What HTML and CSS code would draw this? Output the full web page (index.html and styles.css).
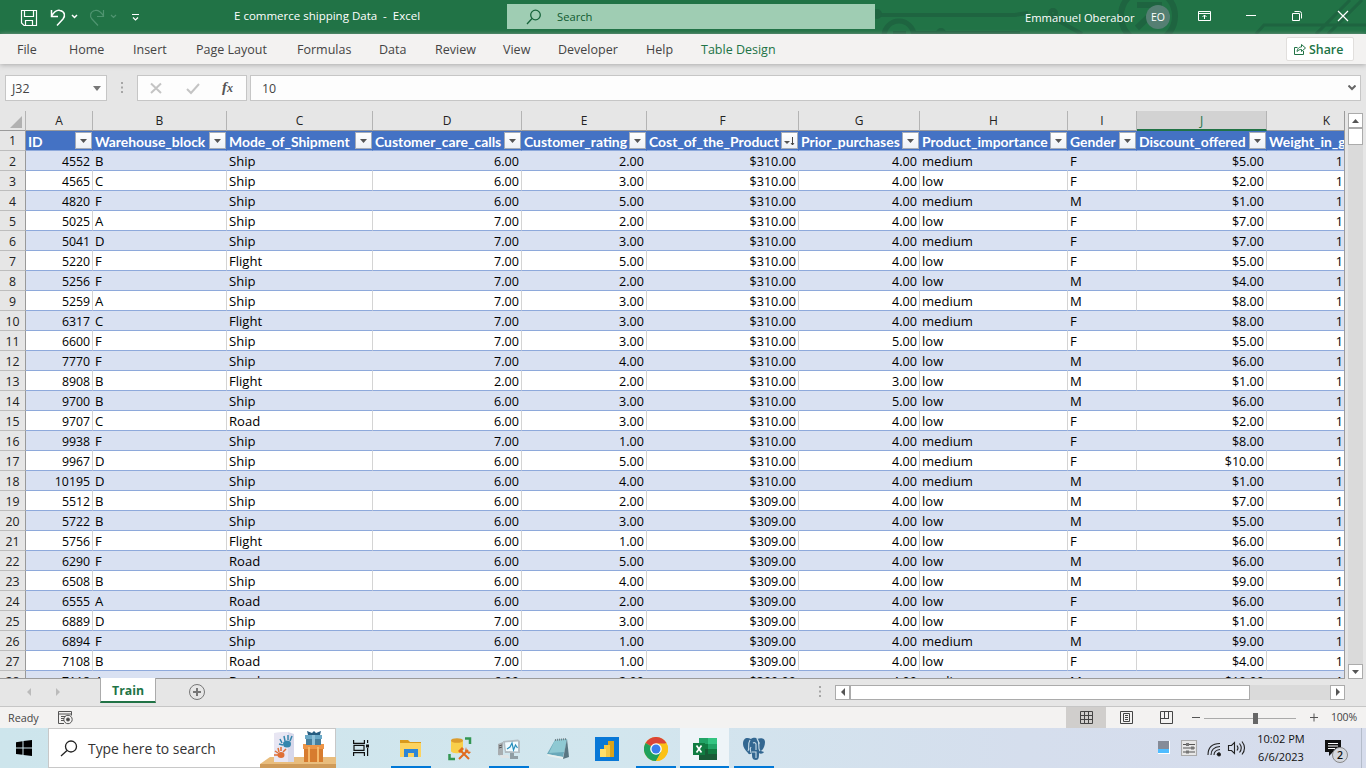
FILE: index.html
```html
<!DOCTYPE html>
<html lang="en">
<head>
<meta charset="utf-8">
<title>E commerce shipping Data - Excel</title>
<link rel="stylesheet" href="styles.css">
</head>
<body>
<div class="app">
  <header class="titlebar">
    <svg class="circuit" width="496" height="34" fill="none" stroke="#1e6440" stroke-width="4">
      <path d="M5 15H145L158 13M42 33L58 33H150M180 16L212 34M226 34"/>
      <circle cx="7" cy="14" r="3"/><circle cx="29" cy="36" r="15" stroke-width="5"/><path d="M23 33h13"/><circle cx="71" cy="33" r="3"/><circle cx="183" cy="13" r="3"/>
      <circle cx="278" cy="16" r="27" stroke-width="6"/><path d="M267 5H292M289 7L267 28" stroke-width="6"/>
      <path d="M386 34L394 25H496M446 34L480 0M458 34L492 0" stroke-width="3"/>
    </svg>
    <svg class="quick" width="150" height="34" fill="none" stroke="#fff" stroke-width="1.2">
      <path d="M21.5 10.5h15v15H24l-2.500-2.500zM24.500 10.500v6h9v-6M25.500 25.500v-5h7v5"/>
      <path d="M51.500 10v6.500H58M51.500 16C55 10.500 58 10 60 10.500C65 11.500 65.500 16 63 19L57 25.500M72 15l2.500 2.500L77 15" stroke-width="1.500"/>
      <path d="M103.500 10v6.500H97M103.500 16C100 10.500 97 10 95 10.500C90 11.500 89.500 16 92 19L98 25.500M111 15l2.500 2.500L116 15" stroke="#4f9470"/>
      <path d="M132 14.500h7M133 17.500l2.500 2.500L138 17.500"/>
    </svg>
    <div class="doc-title">E commerce shipping Data&nbsp; -&nbsp; Excel</div>
    <div class="search"><svg width="16" height="16" fill="none" stroke="#16633a" stroke-width="1.300"><circle cx="9.500" cy="6" r="4.800"/><path d="M6 9.500L1 15"/></svg><span>Search</span></div>
    <div class="user">Emmanuel Oberabor</div>
    <div class="avatar">EO</div>
    <svg class="winctl" width="170" height="34" fill="none" stroke="#fff" stroke-width="1">
      <path d="M2.500 11.500h12v9h-12zM2.500 13.500h12M8.500 19v-4M6.500 17l2-2 2 2M50 15.500h10M96.500 13.500h7v7h-7zM98.500 11.500h5q2 0 2 2v5"/><path d="M142 11l10 10M152 11l-10 10" stroke-width="1.200"/>
    </svg>
  </header>

  <nav class="ribbon">
    <span>File</span><span>Home</span><span>Insert</span><span>Page Layout</span><span>Formulas</span><span>Data</span><span>Review</span><span>View</span><span>Developer</span><span>Help</span><span class="context">Table Design</span>
    <button class="share"><svg width="12" height="12" fill="none" stroke="#217346"><path d="M3.500 4.500h-3v7h9V8M3 8.500C3.500 5 5.500 4 7.500 4V1.500L11.500 5 7.500 8.500V6.500C5.500 6.500 4.500 7 3 8.500z"/></svg>Share</button>
  </nav>

  <div class="formula-row">
    <div class="namebox">J32<svg width="8" height="5"><path d="M0 0h8L4 5z" fill="#777"/></svg></div>
    <svg class="grip" width="3" height="12" fill="#a6a6a6"><path d="M0 0h2v2H0zM0 4.500h2v2H0zM0 9h2v2H0z"/></svg>
    <div class="fx"><svg width="108" height="24" fill="none" stroke="#c4c4c4" stroke-width="2"><path d="M13 7.500l10 9.500M23 7.500L13 17M49 13l4 4 8-9"/></svg><i>f<small>x</small></i></div>
    <div class="formula">10<svg width="8" height="6" fill="none" stroke="#666" stroke-width="2"><path d="M.5.5L4 4 7.500.5"/></svg></div>
  </div>

  <div class="sheet-wrap">
    <main class="sheet" id="sheet"></main>
    <div class="vscroll">
      <span class="sb"><svg width="7" height="4"><path d="M0 4h7L3.500 0z" fill="#555"/></svg></span>
      <span class="vthumb"></span>
      <span class="sb"><svg width="7" height="4"><path d="M0 0h7L3.500 4z" fill="#555"/></svg></span>
    </div>
  </div>

  <div class="tabs">
    <svg class="tabnav" width="100" height="27" fill="#bbb"><path d="M31 9v8l-4-4zM56 9v8l4-4z"/></svg>
    <div class="tab">Train</div>
    <svg class="add" width="18" height="18" fill="none" stroke="#777"><circle cx="9" cy="9" r="7.500"/><path d="M9 5v8M5 9h8" stroke-width="2"/></svg>
    <svg class="grip" width="3" height="12" fill="#a6a6a6"><path d="M0 0h2v2H0zM0 4.500h2v2H0zM0 9h2v2H0z"/></svg>
    <div class="hscroll">
      <span class="sb"><svg width="4" height="8"><path d="M4 0v8L0 4z" fill="#555"/></svg></span>
      <span class="hthumb"></span>
      <span class="sb"><svg width="4" height="8"><path d="M0 0v8l4-4z" fill="#555"/></svg></span>
    </div>
  </div>

  <footer class="status">
    <span class="ready">Ready</span>
    <svg width="16" height="14" fill="none" stroke="#555"><path d="M6 12.500H.5V.5h13v4M.5 3h13M3 5.500h4M3 7.500h3M3 9.500h3"/><circle cx="10" cy="8.500" r="4.200"/><circle cx="10" cy="8.500" r="1.500" fill="#444"/></svg>
    <div class="views">
      <span class="on"><svg width="13" height="13" fill="none" stroke="#444"><path d="M.5.5h12v12H.5zM4.500 0v13M8.500 0v13M0 4.500h13M0 8.500h13"/></svg></span>
      <span><svg width="13" height="13" fill="none" stroke="#444"><path d="M.5.5h12v12H.5zM3.500 2.500h6v8h-6zM5 4.500h3M5 6.500h3M5 8.500h3"/></svg></span>
      <span><svg width="13" height="13" fill="none" stroke="#444"><path d="M.5.5h12v12H.5zM4.500 0v7.500M8.500 0v7.500M0 7.500h9"/></svg></span>
    </div>
    <svg class="zoom" width="128" height="20"><path d="M2 9.500h8M120 9.500h8M124 5.500v8" stroke="#555" fill="none"/><path d="M14 10.500h92" stroke="#aaa"/><path d="M63 5h5v11h-5z" fill="#666"/></svg>
    <span class="pct">100%</span>
  </footer>

  <div class="taskbar">
    <div class="start"><svg width="16" height="16"><path d="M0 2.200L6.500 1.300V7.500H0zM7.500 1.100L16 0V7.500H7.500zM0 8.500h6.500v6.300L0 13.900zM7.500 8.500H16V16L7.500 14.900z"/></svg></div>
    <div class="tsearch">
      <svg class="mag" width="18" height="17" fill="none" stroke="#222" stroke-width="1.300"><circle cx="11" cy="6.500" r="5.500"/><path d="M7 10.500L1 16"/></svg>
      <span>Type here to search</span>
      <svg class="gift" width="76" height="39">
        <path d="M0 35L10 28H76V35z" fill="#e9bd7d"/><path d="M0 35H76v4H0z" fill="#cf9b59"/>
        <path d="M14 4l14-1 6 2v28H14z" fill="#d7d8ea"/><path d="M14 4l14-1v30H14z" fill="#e8e6f3"/>
        <path d="M22 14l-2-4M25 12l-1-5M28 11V6M30 12l2-5M23 16l-4-1" stroke="#3486ad" stroke-width="1.500" fill="none"/><ellipse cx="27" cy="15" rx="4" ry="3.500" fill="#3486ad"/>
        <path d="M18 24l-3-2M19 23l-1-4M21 22V18M23 23l3-3M18 26h-4" stroke="#df6f36" stroke-width="1.500" fill="none"/><ellipse cx="21" cy="26" rx="3.500" ry="3" fill="#df6f36"/>
        <path d="M44 18h19v15H44z" fill="#d77c2f"/><path d="M43 15h21v5H43z" fill="#ed9548"/><path d="M46 8h15v8H46z" fill="#477f9e"/><path d="M45 6h17v4H45z" fill="#6aa8c6"/><path d="M48 6l-1-4 5 2 2-2 2 2 5-2-1 4z" fill="#275d80"/><path d="M52 6h3v10h-3z" fill="#8fc0d8"/><path d="M48 18h2v15h-2zM57 18h2v15h-2z" fill="#f5b869"/>
      </svg>
    </div>
    <div class="task plain"><svg width="17" height="16" fill="none" stroke="#111" stroke-width="1.200"><path d="M.6 0v3.400h10.800V0M.6 16v-3.400h10.800V16M1 5.400h10v5H1zM14.600 0v3M14.600 8v8"/><path d="M13 4.500h3v3h-3z" fill="#111" stroke="none"/></svg></div>
    <div class="task run"><svg width="22" height="20"><path d="M0 1h8l2 2h11v5H0z" fill="#d99a1c"/><path d="M0 4h21v14H0z" fill="#fcd35f"/><path d="M4 18v-8h14v8h-4v-4H8v4z" fill="#2e86d6"/></svg></div>
    <div class="task"><svg width="24" height="24"><path d="M3 3v11c0 3 12 3 12 0V3z" fill="#f9cf4a"/><ellipse cx="9" cy="3.500" rx="6" ry="2.300" fill="#dc9c2d"/><path d="M17 1.500h5V7M1.500 17v5H7" fill="none" stroke="#339653" stroke-width="2.500"/><path d="M13 14l8 8M20 13l-9 9" stroke="#e06b1f" stroke-width="2"/><path d="M10 14l4-4 2 2-4 4zM18 10l1 4 4 1-2 2-4-3z" fill="#e06b1f"/></svg></div>
    <div class="task run"><svg width="24" height="22"><path d="M1 6l5-2v14l-5-1z" fill="#a8adb0"/><path d="M2 8l3-1M2 10l3-1" stroke="#555"/><path d="M6 3l15-1.500 2 1.500v12L8 15z" fill="#b3bcc2"/><path d="M8 4.500l13-1v10L9 13z" fill="#f1fbff"/><path d="M10 11l3-2 2-4 1.500 7 2-5 2 3" fill="none" stroke="#268dbb" stroke-width="1.200"/><path d="M13 15h4v3h4v3h-8z" fill="#909da4"/><path d="M3 17h8l2 3H4z" fill="#dfe3e5"/></svg></div>
    <div class="task"><svg width="24" height="22"><path d="M9 2l12-1-4 18-16-3z" fill="#6aa9ba"/><path d="M9 2l12-1-3 13-15 1z" fill="#8fc9d3"/><path d="M21 1l2 18-6 2z" fill="#597682"/><path d="M1 16l16 3v2L2 18z" fill="#e9f0ef"/><path d="M9 2l12-1" stroke="#718087" stroke-width="2" stroke-dasharray="1 1"/></svg></div>
    <div class="task"><svg width="24" height="24"><path d="M0 0h24v24H0z" fill="#0878d7"/><path d="M13 4h6v16h-6z" fill="#d9a319"/><path d="M9 8h6v12H9z" fill="#f2c745"/><path d="M5 12h6v8H5z" fill="#ffe06a"/></svg></div>
    <div class="task run"><svg width="24" height="24"><circle cx="12" cy="12" r="12" fill="#fbc116"/><path d="M12 12L1.600 6A12 12 0 0 1 22.400 6z" fill="#db4437"/><path d="M12 12L1.600 6A12 12 0 0 0 12 24L17.200 15z" fill="#1fa15d"/><path d="M12 6.500H22.600L22.400 6A12 12 0 0 1 12 24L17 15z" fill="#fbc116"/><circle cx="12" cy="12" r="5.800" fill="#fff"/><circle cx="12" cy="12" r="4.500" fill="#3b7ded"/></svg></div>
    <div class="task run active"><svg width="24" height="22"><path d="M6 0h18v22H6z" fill="#21a366"/><path d="M15 0h9v6h-9z" fill="#33c481"/><path d="M6 6h9v5H6z" fill="#107c41"/><path d="M15 11h9v5h-9z" fill="#107c41"/><path d="M6 11h9v11H6zM15 16h9v6h-9z" fill="#185c37"/><path d="M0 5h12v12H0z" fill="#107c41"/><path d="M3.500 7.500l5 7M8.500 7.500l-5 7" stroke="#fff" stroke-width="1.700"/></svg></div>
    <div class="task run"><svg width="24" height="24"><path d="M1 7C1 1 5 0 9 2c3-2 5-1 6 0 5-2 8 0 8 3 0 4-2 8-4 9l3 1c-1 2-4 2-5 1 0 4 0 7-3 7-4 0-4-3-4-7-1 1-3 2-4 0C3 13 1 10 1 7z" fill="#336791"/><path d="M8 3C5 8 8 11 6 14M9 16c0-3-2-3 0-6M15 2c4 4 0 9 3 12M10 15h4v6M11 6q2-1 3 1v6M16 6h2" fill="none" stroke="#c9dde9" stroke-width="1.100"/></svg></div>
    <div class="tray">
      <svg width="96" height="24" fill="none" stroke="#222" stroke-width="1.100">
        <g stroke="none"><path d="M1 5h12v13H1z" fill="#fff"/><path d="M1 5h11v8H1z" fill="#858b98"/><path d="M1 13h11v4H1z" fill="#4fbcff"/><path d="M24 4h15v16H24z" fill="#e7e7e7"/></g>
        <path d="M24.500 4.500h15v15h-15z" stroke="#aaa"/><path d="M26 8.500h12M26 12h12M26 16h12" stroke="#555"/><path d="M29 7h3v3h-3zM34 10.500h3v3h-3zM29 14.500h3v3h-3z" fill="#777" stroke="none"/>
        <path d="M51 19C51 12 55 7.500 63 7.500M54 19c0-5 3-8 9-8.500M57 19c0-3 2-5 6-5.500M60 19c0-1.500 1-2 2.500-2.500"/><circle cx="62" cy="18.500" r="1.400" fill="#111"/>
        <path d="M71.500 9.500h3l3-3v11l-3-3h-3zM80 9.500q2 2.500 0 5M82.500 7.500q3.500 4.500 0 9M85 5.500q5 6.500 0 13"/>
      </svg>
      <div class="clock"><span>10:02 PM</span><span>6/6/2023</span></div>
      <div class="notif"><svg width="17" height="18"><path d="M0 0h16v12H8l-4 4v-4H0z" fill="#111"/><path d="M3 3.500h10M3 6h10M3 8.500h7" stroke="#fff"/></svg><b>2</b></div>
    </div>
  </div>
</div>
<script src="sheet.js"></script>
</body>
</html>
```
FILE: styles.css
```css
* { box-sizing: border-box; }
body { margin: 0; font-family: "Open Sans", "Noto Sans", sans-serif; color: #444; overflow: hidden; }
svg { display: block; flex: none; }
.app { width: 1366px; height: 768px; display: flex; flex-direction: column; background: #e6e6e6; }

.titlebar { height: 34px; background: #217346; color: #fff; display: flex; align-items: center; position: relative; font-size: 11.4px; white-space: nowrap; }
.circuit { position: absolute; right: 0; top: 0; }
.quick { margin-right: 84px; }
.doc-title { width: 273px; padding-bottom: 4px; font-size: 11.5px; }
.search { width: 368px; height: 25px; margin-bottom: 1px; background: #9fcdb3; color: #0f5a30; display: flex; align-items: center; padding-left: 19px; gap: 15px; position: relative; font-size: 11.2px; }
.user { margin-left: 150px; width: 121px; padding-top: 1px; position: relative; font-size: 11.2px; }
.avatar { width: 24px; height: 24px; border-radius: 50%; background: #557f73; display: grid; place-items: center; position: relative; font-size: 10.5px; }
.winctl { margin-left: 26px; position: relative; }

.ribbon { height: 30px; background: #f3f2f1; display: grid; grid-template-columns: 52px 64px 63px 101px 82px 56px 68px 55px 88px 55px 1fr 68px; align-items: center; padding: 0 12px 0 17px; font-size: 12.5px; box-shadow: 0 1px 5px #aaa; position: relative; }
.ribbon span { white-space: nowrap; }
.ribbon .context { color: #217346; }
.share { height: 24px; border: 1px solid #e1dfdd; border-radius: 2px; background: #fff; color: #217346; font: 600 12.4px "Open Sans", sans-serif; display: flex; align-items: center; gap: 3px; padding: 0 7px; }

.formula-row { height: 47px; padding: 11px 5px 10px; display: flex; align-items: center; font-size: 12.4px; }
.formula-row > div { height: 26px; background: #fdfdfd; border: 1px solid #c6c6c6; display: flex; align-items: center; }
.namebox { width: 102px; justify-content: space-between; padding: 0 5px 0 6px; }
.formula-row .grip { margin: 0 13px 0 14px; }
.formula-row .fx { width: 110px; margin-right: 3px; position: relative; }
.fx i { position: absolute; left: 84px; top: 3px; font: italic bold 15px "Liberation Serif", serif; color: #555; }
.fx small { font-size: 12px; }
.formula { flex: 1; justify-content: space-between; padding: 0 4px 0 11px; }

.sheet-wrap { height: 568px; display: flex; gap: 3px; }
.sheet { width: 1345px; border-right: 1px solid #9b9b9b; border-bottom: 1px solid #9b9b9b; overflow: hidden; background: #fff; }
.row { display: grid; grid-template-columns: 26px 67px 134px 146px 149px 125px 152px 121px 148px 69px 130px 118px; height: 20px; font-size: 13.1px; line-height: 20px; color: #000; }
.row > * { white-space: nowrap; overflow: hidden; border-right: 1px solid #d4d4d4; border-bottom: 1px solid #8ea9db; padding: 0 2px; height: 20px; }
.row > .num { text-align: right; font-size: 12.6px; line-height: 21px; }
.row > .weight { padding-right: 41px; }
.row > .num:nth-child(2) { font-size: 12.3px; }
.banded > * { background: #d9e1f2; border-right-color: #d9e1f2; }
.row > .rownum { background: #e6e6e6; color: #222; text-align: center; padding: 0; font-size: 12.3px; line-height: 21px; border-color: #bdbdbd; border-right-color: #999; }
.cols > * { background: #e6e6e6; color: #222; text-align: center; font-size: 12px; border-right-color: #b4b4b4; border-bottom-color: #9b9b9b; }
.cols > .sel { background: #d2d2d2; color: #217346; border-bottom: 2px solid #217346; }
.cols svg { margin: 5px 0 0 8px; }
.cols > .last { padding-right: 0; }
.head > * { background: #4472c4; color: #fff; border-right-color: #4472c4; display: flex; justify-content: space-between; align-items: center; padding-right: 0; }
.head > .rownum { justify-content: center; }
.head b { font: 700 13.9px/19px Lato, "Open Sans", sans-serif; padding-top: 1px; }
.filter { width: 17px; height: 17px; border: 1px solid #a5acb8; background: linear-gradient(#fff, #eef1f6); display: grid; place-items: center; flex: none; }
.vscroll { width: 15px; margin: 2px 0 0; background: #dadada; display: flex; flex-direction: column; }
.sb { background: #fff; border: 1px solid #ababab; width: 15px; height: 15px; display: grid; place-items: center; flex: none; }
.vthumb { height: 17px; margin-bottom: auto; background: #fff; border: 1px solid #ababab; }

.tabs { height: 27px; display: flex; align-items: center; padding-bottom: 1px; }
.tab { width: 56px; height: 25px; align-self: flex-start; background: #fff; border: solid #ababab; border-width: 0 1px; border-bottom: 2px solid #217346; color: #217346; font-size: 12.3px; font-weight: 700; text-align: center; line-height: 26px; margin-top: -1px; }
.add { margin: 0 613px 0 32px; }
.hscroll { display: flex; width: 510px; margin-left: 13px; background: #dadada; }
.hthumb { width: 400px; margin-right: auto; border: 1px solid #ababab; background: #fff; }

.status { height: 22px; border-top: 1px solid #c6c6c6; background: #f3f2f1; display: flex; align-items: center; font-size: 10.8px; padding-left: 8px; }
.ready { width: 50px; padding-bottom: 1px; }
.views { display: flex; margin-left: 992px; height: 21px; }
.views span { width: 40px; display: grid; place-items: center; }
.views .on { background: #d0cecc; }
.zoom { margin-left: 4px; }
.pct { margin-left: 13px; padding-bottom: 1px; font-size: 10.5px; letter-spacing: -.2px; }

.taskbar { height: 40px; display: flex; background: linear-gradient(90deg, #cde5ec, #d2e6ee 45%, #d5deed 75%, #d6dcec); }
.start { width: 48px; display: grid; place-items: center; }
.tsearch { width: 288px; background: #fff; border: 1px solid #c8c8c8; display: flex; align-items: center; padding-left: 11px; font-size: 13.9px; color: #333; position: relative; white-space: nowrap; }
.tsearch span { margin-left: 10px; }
.gift { position: absolute; right: -1px; bottom: -1px; }
.task { width: 49px; padding-top: 1px; display: grid; place-items: center; position: relative; }
.task.plain { width: 50px; padding: 0; }
.run::after { content: ""; position: absolute; left: 5px; right: 4px; bottom: 0; height: 2px; background: #0078d7; }
.active { background: #eef4f8; }
.active::after { left: 0; right: 0; }
.tray { margin-left: auto; width: 209px; display: flex; align-items: center; color: #111; }
.clock { margin-left: 2px; width: 52px; display: flex; flex-direction: column; text-align: center; font-size: 11px; line-height: 18px; white-space: nowrap; padding-bottom: 1px; }
.notif { margin-left: 18px; position: relative; width: 37px; height: 40px; padding-top: 12px; background: linear-gradient(#b4bcca, #b4bcca) 36px 0 / 1px 100% no-repeat; }
.notif b { position: absolute; left: 7px; top: 19px; width: 16px; height: 16px; border-radius: 50%; border: 1px solid #888; background: #d5d8df; font-size: 10.5px; line-height: 14px; text-align: center; font-weight: 600; }
```
FILE: sheet.js
```js
const letters = 'ABCDEFGHIJK'.split('');
const headers = ['ID', 'Warehouse_block', 'Mode_of_Shipment', 'Customer_care_calls', 'Customer_rating', 'Cost_of_the_Product', 'Prior_purchases', 'Product_importance', 'Gender', 'Discount_offered', 'Weight_in_gms'];
// id, block, mode, calls, rating, cost, purchases, importance, gender, discount
const data = `4552 B Ship 6 2 310 4 medium F 5
4565 C Ship 6 3 310 4 low F 2
4820 F Ship 6 5 310 4 medium M 1
5025 A Ship 7 2 310 4 low F 7
5041 D Ship 7 3 310 4 medium F 7
5220 F Flight 7 5 310 4 low F 5
5256 F Ship 7 2 310 4 low M 4
5259 A Ship 7 3 310 4 medium M 8
6317 C Flight 7 3 310 4 medium F 8
6600 F Ship 7 3 310 5 low F 5
7770 F Ship 7 4 310 4 low M 6
8908 B Flight 2 2 310 3 low M 1
9700 B Ship 6 3 310 5 low M 6
9707 C Road 6 3 310 4 low F 2
9938 F Ship 7 1 310 4 medium F 8
9967 D Ship 6 5 310 4 medium F 10
10195 D Ship 6 4 310 4 medium M 1
5512 B Ship 6 2 309 4 low M 7
5722 B Ship 6 3 309 4 low M 5
5756 F Flight 6 1 309 4 low F 6
6290 F Road 6 5 309 4 low M 6
6508 B Ship 6 4 309 4 low M 9
6555 A Road 6 2 309 4 low F 6
6889 D Ship 7 3 309 4 low F 1
6894 F Ship 6 1 309 4 medium M 9
7108 B Road 7 1 309 4 low F 4
7118 A Road 6 2 309 4 medium M 10`.split('\n').map(r => r.split(' '));

const arrow = '<svg width="7" height="4"><path d="M0 0h7L3.5 4z" fill="#555"/></svg>';
const sorted = '<svg width="11" height="10"><path d="M0 5h6L3 8z" fill="#555"/><path d="M8.500 1v8M7 7l1.500 2L10 7" stroke="#444" fill="none"/></svg>';
const cell = (text, cls = '') => `<div class="${cls}">${text}</div>`;

let html = '<div class="row cols">' + cell('<svg width="12" height="12"><path d="M12 0v12H0z" fill="#b1b1b1"/></svg>') +
  letters.map(l => cell(l, l === 'J' ? 'sel' : l === 'K' ? 'last' : '')).join('') + '</div>';
html += '<div class="row head">' + cell(1, 'rownum') +
  headers.map((h, i) => cell(`<b>${h}</b>` + (i < 10 ? `<span class="filter">${i === 5 ? sorted : arrow}</span>` : ''))).join('') + '</div>';
data.forEach((r, i) => {
  html += `<div class="row${i % 2 ? '' : ' banded'}">` + cell(i + 2, 'rownum') +
    r.map((v, c) => {
      const text = c === 3 || c === 4 || c === 6 ? v + '.00' : c === 5 || c === 9 ? '$' + v + '.00' : v;
      return cell(text, [0, 3, 4, 5, 6, 9].includes(c) ? 'num' : '');
    }).join('') + cell(1, 'num weight') + '</div>';
});
document.getElementById('sheet').innerHTML = html;
```
